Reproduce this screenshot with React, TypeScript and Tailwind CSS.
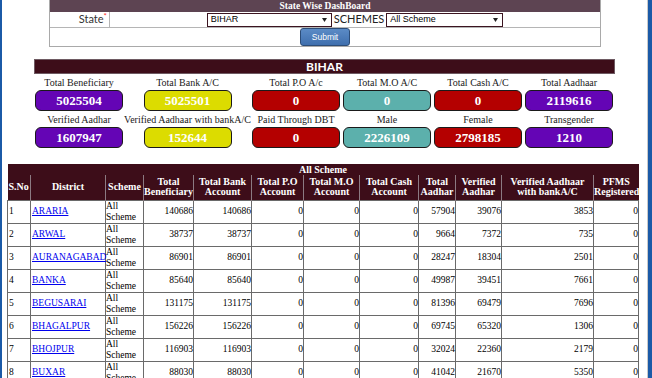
import React from "react";

const serif = { fontFamily: '"Liberation Serif", "Times New Roman", serif' };

const stats = [
  [
    { label: "Total Beneficiary", value: "5025504", color: "bg-[#6405b5]" },
    { label: "Total Bank A/C", value: "5025501", color: "bg-[#dcdc00]" },
    { label: "Total P.O A/c", value: "0", color: "bg-[#b40000]" },
    { label: "Total M.O A/C", value: "0", color: "bg-[#5cb0ac]" },
    { label: "Total Cash A/C", value: "0", color: "bg-[#b40000]" },
    { label: "Total Aadhaar", value: "2119616", color: "bg-[#6405b5]" },
  ],
  [
    { label: "Verified Aadhar", value: "1607947", color: "bg-[#6405b5]" },
    { label: "Verified Aadhaar with bankA/C", value: "152644", color: "bg-[#dcdc00]" },
    { label: "Paid Through DBT", value: "0", color: "bg-[#b40000]" },
    { label: "Male", value: "2226109", color: "bg-[#5cb0ac]" },
    { label: "Female", value: "2798185", color: "bg-[#b40000]" },
    { label: "Transgender", value: "1210", color: "bg-[#6405b5]" },
  ],
];

const rows = [
  ["1", "ARARIA", "140686", "140686", "0", "0", "0", "57904", "39076", "3853", "0"],
  ["2", "ARWAL", "38737", "38737", "0", "0", "0", "9664", "7372", "735", "0"],
  ["3", "AURANAGABAD", "86901", "86901", "0", "0", "0", "28247", "18304", "2501", "0"],
  ["4", "BANKA", "85640", "85640", "0", "0", "0", "49987", "39451", "7661", "0"],
  ["5", "BEGUSARAI", "131175", "131175", "0", "0", "0", "81396", "69479", "7696", "0"],
  ["6", "BHAGALPUR", "156226", "156226", "0", "0", "0", "69745", "65320", "1306", "0"],
  ["7", "BHOJPUR", "116903", "116903", "0", "0", "0", "32024", "22360", "2179", "0"],
  ["8", "BUXAR", "88030", "88030", "0", "0", "0", "41042", "21670", "5350", "0"],
];

function FakeSelect({ text, width }: { text: string; width: string }) {
  return (
    <div
      className={`${width} h-[14px] border border-[#3b1420] bg-white flex items-center justify-between pl-[3px] pr-[4px] text-[9px] text-black`}
      style={{ fontFamily: '"Liberation Sans", Arial, sans-serif' }}
    >
      <span>{text}</span>
      <svg width="5" height="4" viewBox="0 0 5 4">
        <path d="M0 0 L5 0 L2.5 4 Z" fill="#222" />
      </svg>
    </div>
  );
}

function StatCell({ label, value, color, w }: { label: string; value: string; color: string; w: string }) {
  return (
    <div className={`${w} flex flex-col items-center`}>
      <div className="h-[16px] flex items-center text-[10px] text-[#1a1a1a] whitespace-nowrap" style={serif}>
        {label}
      </div>
      <div
        className={`w-[88px] h-[21px] ${color} rounded-[6px] border border-[#1a1a1a] flex items-center justify-center text-white font-bold text-[13px]`}
        style={serif}
      >
        {value}
      </div>
    </div>
  );
}

export default function App() {
  const widths = ["w-[88px]", "w-[123px]", "w-[88px]", "w-[88px]", "w-[88px]", "w-[88px]"];
  return (
    <div className="flex w-[652px] h-[378px] overflow-hidden bg-white">
      <div className="w-[2px] bg-[#1b5aa7]" />
      <div className="flex-1 flex flex-col">
        {/* state selection panel */}
        <div className="ml-[47px] w-[552px] h-[47px] border-x border-b border-[#a9a9a9] flex flex-col">
          <div className="h-[12px] bg-[#5d4452] text-white font-bold text-[9.5px] leading-[12px] text-center" style={serif}>
            State Wise DashBoard
          </div>
          <div className="h-[16px] flex border-b border-[#b5b5b5]">
            <div
              className="w-[60px] border-r border-[#b5b5b5] flex items-center justify-end pr-[2px] text-[11px] text-[#333]"
              style={{ fontFamily: "Lato, sans-serif" }}
            >
              State<sup className="text-[#ff2a2a] text-[8px]">*</sup>
            </div>
            <div className="flex-1 flex items-center justify-center gap-[2px]">
              <FakeSelect text="BIHAR" width="w-[125px]" />
              <span className="text-[11px] text-[#222]" style={{ fontFamily: "Lato, sans-serif" }}>
                SCHEMES
              </span>
              <FakeSelect text="All Scheme" width="w-[117px]" />
            </div>
          </div>
          <div className="flex-1 flex items-center justify-center">
            <button
              className="w-[50px] h-[18px] rounded-[3px] border border-[#2c4d78] bg-gradient-to-b from-[#5b8bc6] to-[#3f6fae] text-white text-[8.5px]"
              style={{ fontFamily: '"Liberation Sans", Arial, sans-serif' }}
            >
              Submit
            </button>
          </div>
        </div>

        {/* state summary */}
        <div className="ml-[32px] mt-[12px] w-[581px]">
          <div
            className="h-[15px] bg-[#3d0d19] border border-[#6e5a62] text-white font-bold text-[12px] leading-[13px] text-center"
            style={{ fontFamily: "Lato, sans-serif" }}
          >
            BIHAR
          </div>
          {stats.map((line, i) => (
            <div key={i} className="flex gap-[3px] pl-[1px]">
              {line.map((s, j) => (
                <StatCell key={j} {...s} w={widths[j]} />
              ))}
            </div>
          ))}
        </div>

        {/* district table */}
        <table className="ml-[5px] mt-[16px] w-[631px] table-fixed border-collapse" style={serif}>
          <colgroup>
            <col className="w-[23px]" />
            <col className="w-[75px]" />
            <col className="w-[38px]" />
            <col className="w-[50px]" />
            <col className="w-[58px]" />
            <col className="w-[52px]" />
            <col className="w-[56px]" />
            <col className="w-[59px]" />
            <col className="w-[37px]" />
            <col className="w-[46px]" />
            <col className="w-[92px]" />
            <col className="w-[45px]" />
          </colgroup>
          <thead className="bg-[#3d0d19] text-white font-bold text-[10px]">
            <tr>
              <th colSpan={12} className="h-[11px] leading-[11px] p-0 text-center">
                All Scheme
              </th>
            </tr>
            <tr className="leading-[10.5px]">
              <th className="h-[25px] p-0 pl-[1px] text-left whitespace-nowrap">S.No</th>
              <th className="p-0 border-l border-[#8c7a82] whitespace-nowrap">District</th>
              <th className="p-0 border-l border-[#8c7a82] whitespace-nowrap">Scheme</th>
              <th className="p-0 border-l border-[#8c7a82] whitespace-nowrap">Total<br />Beneficiary</th>
              <th className="p-0 border-l border-[#8c7a82] whitespace-nowrap">Total Bank<br />Account</th>
              <th className="p-0 border-l border-[#8c7a82] whitespace-nowrap">Total P.O<br />Account</th>
              <th className="p-0 border-l border-[#8c7a82] whitespace-nowrap">Total M.O<br />Account</th>
              <th className="p-0 border-l border-[#8c7a82] whitespace-nowrap">Total Cash<br />Account</th>
              <th className="p-0 border-l border-[#8c7a82] whitespace-nowrap">Total<br />Aadhar</th>
              <th className="p-0 border-l border-[#8c7a82] whitespace-nowrap">Verified<br />Aadhar</th>
              <th className="p-0 border-l border-[#8c7a82] whitespace-nowrap">Verified Aadhaar<br />with bankA/C</th>
              <th className="p-0 border-l border-[#8c7a82] whitespace-nowrap">PFMS<br />Registered</th>
            </tr>
          </thead>
          <tbody className="text-[9.5px] text-black">
            {rows.map((r) => (
              <tr key={r[0]}>
                <td className="h-[23px] p-0 pl-[1px] border border-[#6a6a6a]">{r[0]}</td>
                <td className="p-0 pl-[1px] border border-[#6a6a6a] whitespace-nowrap">
                  <a href="#" className="text-[#0000ee] underline">
                    {r[1]}
                  </a>
                </td>
                <td className="p-0 border border-[#6a6a6a] leading-[11px] align-top">
                  All
                  <br />
                  Scheme
                </td>
                {r.slice(2).map((v, k) => (
                  <td key={k} className="p-0 text-right border border-[#6a6a6a]">
                    {v}
                  </td>
                ))}
              </tr>
            ))}
          </tbody>
        </table>
      </div>
      <div className="w-[1px] bg-[#c9c9c9]" />
      <div className="w-[4px] bg-[#1b5aa7]" />
    </div>
  );
}
